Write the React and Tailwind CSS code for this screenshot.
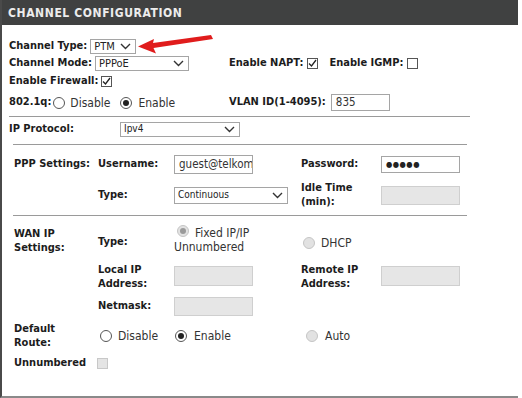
import React from "react";

const Chevron = () => (
  <svg width="11" height="7" viewBox="0 0 11 7" className="shrink-0">
    <path d="M1 1 L5.5 5.5 L10 1" fill="none" stroke="#333" strokeWidth="1.4" />
  </svg>
);

const Select = ({ w, h = "h-[15px]", value, small }) => (
  <div className={`${w} ${h} border border-[#a5a5a5] bg-white flex items-center justify-between pl-[3px] pr-[4px] ${small ? "text-[10px]" : "text-[11px]"} text-[#222] font-normal`}>
    <span className="leading-none">{value}</span>
    <Chevron />
  </div>
);

const Check = ({ checked, disabled }) => (
  <div className={`w-[11px] h-[11px] border ${disabled ? "border-[#c8c8c8] bg-[#e4e4e4]" : "border-[#555] bg-white"} flex items-center justify-center shrink-0`}>
    {checked && (
      <svg width="9" height="9" viewBox="0 0 9 9">
        <path d="M1 4.5 L3.5 7 L8 1" fill="none" stroke="#222" strokeWidth="1.3" />
      </svg>
    )}
  </div>
);

const Radio = ({ checked, disabled }) => (
  <div className={`w-[12px] h-[12px] rounded-full border ${disabled ? "border-[#c5c5c5] bg-[#e2e2e2]" : "border-[#555] bg-white"} flex items-center justify-center shrink-0`}>
    {checked && <div className={`w-[6px] h-[6px] rounded-full ${disabled ? "bg-[#9a9a9a]" : "bg-[#222]"}`} />}
  </div>
);

const Input = ({ w = "w-[79px]", h = "h-[19px]", value, disabled }) => (
  <div className={`${w} ${h} border ${disabled ? "border-[#cfcfcf] bg-[#e6e6e6]" : "border-[#a5a5a5] bg-white"} flex items-center px-[4px] text-[11.5px] text-[#333] font-normal overflow-hidden whitespace-nowrap`}>
    {value}
  </div>
);

const Line = ({ className }) => <div className={`h-px bg-[#9a9a9a] ${className}`} />;

export default function App() {
  return (
    <div className="w-[522px] h-[398px] bg-white font-['DejaVu_Sans_Condensed','DejaVu_Sans',sans-serif] text-[11px] text-[#1c1c1c] relative overflow-hidden">
      <div className="w-[518px] h-[398px] border-l-2 border-l-[#4a4a4a] border-b-2 border-b-[#8a8a8a]">
        {/* header */}
        <div className="h-[25px] bg-[#404141] flex items-center pl-[6px] text-[#ececec] font-bold text-[12px] tracking-[0.6px]">
          CHANNEL CONFIGURATION
        </div>

        {/* top section */}
        <div className="pl-[7px] pt-[13px] font-bold">
          <div className="flex items-center h-[16px]">
            <span className="mr-[3px]">Channel Type:</span>
            <Select w="w-[46px]" value="PTM" />
          </div>
          <div className="flex items-center h-[16px] mt-[1px]">
            <div className="w-[220px] flex items-center">
              <span className="w-[86px]">Channel Mode:</span>
              <Select w="w-[94px]" value="PPPoE" />
            </div>
            <span className="mr-[4px]">Enable NAPT:</span>
            <Check checked />
            <span className="ml-[11px] mr-[4px]">Enable IGMP:</span>
            <Check />
          </div>
          <div className="flex items-center h-[16px] mt-[2px]">
            <span className="mr-[3px]">Enable Firewall:</span>
            <Check checked />
          </div>
          <div className="flex items-center h-[19px] mt-[4px]">
            <div className="w-[220px] flex items-center">
              <span className="mr-[2px]">802.1q:</span>
              <Radio />
              <span className="ml-[5px] mr-[10px] font-normal text-[#333] text-[12px]">Disable</span>
              <Radio checked />
              <span className="ml-[6px] font-normal text-[#333] text-[12px]">Enable</span>
            </div>
            <span className="mr-[5px]">VLAN ID(1-4095):</span>
            <Input w="w-[59px]" h="h-[17px]" value="835" />
          </div>
        </div>

        <Line className="mt-[4px] ml-[7px] w-[461px]" />

        <div className="flex items-center h-[16px] mt-[4px] pl-[7px] font-bold">
          <span className="w-[111px]">IP Protocol:</span>
          <Select w="w-[120px]" value="Ipv4" small />
        </div>

        <Line className="mt-[7px] ml-[11px] w-[454px]" />

        {/* grid section */}
        <div className="pl-[12px] font-bold">
          <div className="flex items-center h-[19px] mt-[10px]">
            <span className="w-[84px]">PPP Settings:</span>
            <span className="w-[76px]">Username:</span>
            <div className="w-[127px]"><Input value="guest@telkom" /></div>
            <span className="w-[80px]">Password:</span>
            <Input h="h-[17px]" value={<span className="text-[8px] tracking-[0.5px] text-[#222]">●●●●●</span>} />
          </div>
          <div className="flex items-center h-[20px] mt-[11px]">
            <span className="w-[84px]" />
            <span className="w-[76px]">Type:</span>
            <div className="w-[127px]"><Select w="w-[114px]" h="h-[17px]" value="Continuous" small /></div>
            <span className="w-[80px] leading-[14px]">Idle Time<br />(min):</span>
            <Input disabled />
          </div>

          <Line className="mt-[10px] -ml-[1px] w-[454px]" />

          <div className="flex items-start mt-[10px] h-[28px]">
            <span className="w-[84px] leading-[14px] pt-[1px]">WAN IP<br />Settings:</span>
            <span className="w-[76px] pt-[8px]">Type:</span>
            <div className="w-[127px] font-normal text-[#333] text-[12px] leading-[14px]">
              <div className="flex items-center">
                <span className="ml-[3px] mr-[6px] -mt-[4px]"><Radio checked disabled /></span>
                <span>Fixed IP/IP</span>
              </div>
              <div>Unnumbered</div>
            </div>
            <div className="flex items-center font-normal text-[#333] text-[12px] pt-[8px]">
              <span className="ml-[2px] mr-[6px]"><Radio disabled /></span>
              <span>DHCP</span>
            </div>
          </div>

          <div className="flex items-center h-[28px] mt-[9px]">
            <span className="w-[84px]" />
            <span className="w-[76px] leading-[14px]">Local IP<br />Address:</span>
            <div className="w-[127px] self-start pt-[3px]"><Input disabled h="h-[20px]" /></div>
            <span className="w-[80px] leading-[14px]">Remote IP<br />Address:</span>
            <div className="self-start pt-[3px]"><Input disabled h="h-[20px]" /></div>
          </div>

          <div className="flex items-center h-[20px] mt-[5px]">
            <span className="w-[84px]" />
            <span className="w-[76px]">Netmask:</span>
            <Input disabled />
          </div>

          <div className="flex items-center h-[28px] mt-[6px]">
            <span className="w-[84px] leading-[14px]">Default<br />Route:</span>
            <div className="w-[76px] flex items-center font-normal text-[#333] text-[12px] pl-[2px]">
              <span className="mr-[6px]"><Radio /></span>Disable
            </div>
            <div className="w-[127px] flex items-center font-normal text-[#333] text-[12px] pl-[1px]">
              <span className="mr-[7px]"><Radio checked /></span>Enable
            </div>
            <div className="flex items-center font-normal text-[#333] text-[12px] pl-[5px]">
              <span className="mr-[7px]"><Radio disabled /></span>Auto
            </div>
          </div>

          <div className="flex items-center h-[16px] mt-[5px]">
            <span className="w-[83px]">Unnumbered</span>
            <Check disabled />
          </div>
        </div>
      </div>

      {/* red arrow */}
      <svg className="absolute left-[136px] top-[31px]" width="80" height="24" viewBox="0 0 80 24">
        <path d="M2 15.5 L18 8 L17 12 L75 4 L77 8 L17.5 17 L20 22.5 Z" fill="#e01c1c" />
      </svg>
    </div>
  );
}
